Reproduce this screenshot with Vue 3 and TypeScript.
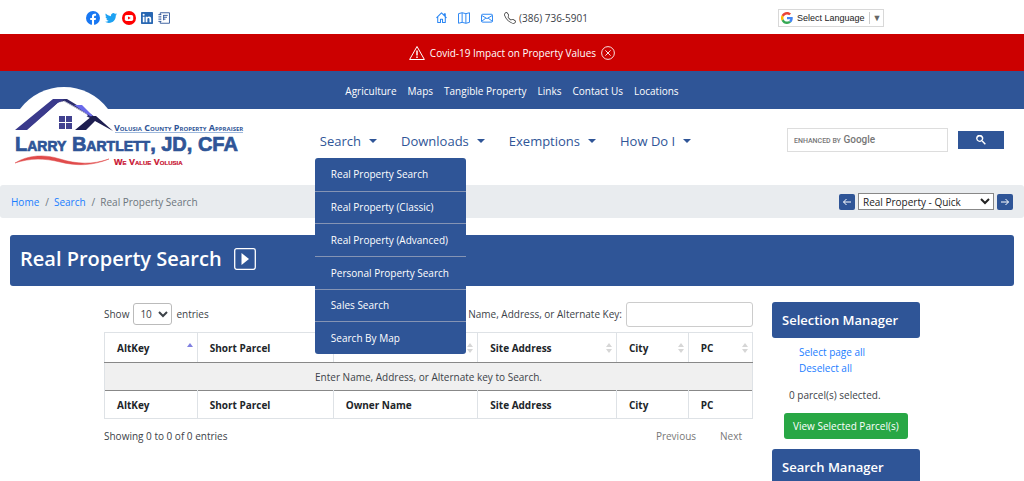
<script setup lang="ts">
import { ref } from 'vue'

const quickLinks = ['Agriculture', 'Maps', 'Tangible Property', 'Links', 'Contact Us', 'Locations']

const searchMenu = [
  'Real Property Search',
  'Real Property (Classic)',
  'Real Property (Advanced)',
  'Personal Property Search',
  'Sales Search',
  'Search By Map',
]

const menus = ['Search', 'Downloads', 'Exemptions', 'How Do I']
const openMenu = ref('Search')

function toggleMenu(name: string) {
  openMenu.value = openMenu.value === name ? '' : name
}

const columns = [
  { label: 'AltKey', cls: 'c-alt' },
  { label: 'Short Parcel', cls: 'c-parcel' },
  { label: 'Owner Name', cls: 'c-owner' },
  { label: 'Site Address', cls: 'c-site' },
  { label: 'City', cls: 'c-city' },
  { label: 'PC', cls: 'c-pc' },
]

const pageSize = ref('10')
const filter = ref('')
const siteQuery = ref('')
const target = ref('Real Property - Quick')
const showBanner = ref(true)
</script>

<template>
  <div class="page">
    <div class="topbar">
      <div class="social">
        <a href="#" aria-label="Facebook">
          <svg class="ico14" viewBox="0 0 16 16"><circle cx="8" cy="8" r="8" fill="#1877f2" /><path d="M6.8 16V10.3H4.8V8h2V6.300c0-2 1.200-3.100 3-3.100.9 0 1.700.15 1.700.15v2h-1c-1 0-1.300.6-1.300 1.250V8h2.200l-.35 2.300H9.200V16z" fill="#fff" /></svg>
        </a>
        <a href="#" aria-label="Twitter">
          <svg class="ico12" viewBox="0 0 24 24"><path fill="#1da1f2" d="M23.950 4.570a10 10 0 0 1-2.820.770 4.960 4.960 0 0 0 2.160-2.720c-.95.550-2 .950-3.130 1.180a4.920 4.920 0 0 0-8.380 4.480C7.690 8.090 4.070 6.130 1.640 3.160a4.820 4.820 0 0 0-.670 2.480c0 1.710.870 3.210 2.190 4.100a4.900 4.900 0 0 1-2.230-.620v.060a4.920 4.920 0 0 0 3.950 4.830 5 5 0 0 1-2.210.080 4.940 4.940 0 0 0 4.600 3.420A9.870 9.870 0 0 1 0 19.540a14 14 0 0 0 7.550 2.210c9.050 0 14-7.500 14-13.980v-.640a9.900 9.900 0 0 0 2.400-2.560z" /></svg>
        </a>
        <a href="#" aria-label="YouTube">
          <svg class="ico14" viewBox="0 0 16 16"><circle cx="8" cy="8" r="8" fill="#f00" /><rect x="3.200" y="4.500" width="9.600" height="7" rx="2" fill="#fff" /><path d="M6.900 6.200v3.600L10 8z" fill="#f00" /></svg>
        </a>
        <a href="#" aria-label="LinkedIn">
          <svg class="ico12" viewBox="0 0 16 16"><rect width="16" height="16" rx="1" fill="#2867b2" /><path fill="#fff" d="M2.400 6.200h2.300v7.400H2.400zM6.200 6.200h2.200v1c.4-.7 1.200-1.200 2.300-1.200 2.300 0 2.900 1.500 2.900 3.500v4.100h-2.300V9.900c0-.9-.1-2-1.300-2s-1.500.9-1.500 1.900v3.800H6.200z" /><circle cx="3.550" cy="3.700" r="1.400" fill="#fff" /></svg>
        </a>
        <a href="#" aria-label="Newsletter">
          <svg class="ico12" viewBox="0 0 16 16" fill="none" stroke="#2f5597"><path d="M3 4V1h12.300v14H3v-3M3 6v1M3 9v1" stroke-width="1.200" /><path d="M.5 3.500h4M.5 6.500h4M.5 9.500h4M.5 12.500h4M7 4.500h6M7 7h5M7 9.500h3M7.500 4v7" stroke-width="1.200" /></svg>
        </a>
      </div>
      <div class="contact">
        <a href="#" aria-label="Home">
          <svg class="ico11" viewBox="0 0 16 16" fill="none" stroke="#2a86f3" stroke-width="1.500" stroke-linejoin="round"><path d="M2.500 7v8.300h4V10.500h3v4.800h4V7M.7 8.500 8 1.200l7.300 7.300M12 5V2.500h1.500v4" /></svg>
        </a>
        <a href="#" aria-label="Map">
          <svg class="ico12" viewBox="0 0 16 16" fill="none" stroke="#2a86f3" stroke-width="1.300" stroke-linejoin="round"><path d="M.7 2.200 5.500 1l5 1.200L15.300 1v12.800l-4.800 1.200-5-1.200-4.800 1.200zM5.500 1v12.800M10.500 2.200V15" /></svg>
        </a>
        <a href="#" aria-label="Email">
          <svg class="ico12" viewBox="0 0 16 16" fill="none" stroke="#2a86f3" stroke-width="1.300" stroke-linejoin="round"><rect x=".7" y="3" width="14.600" height="10.500" rx="1.500" /><path d="m.9 4.600 7.100 4.200 7.100-4.200M.9 12.400l5.600-4.300M15.100 12.400 9.500 8.100" /></svg>
        </a>
        <span class="phone">
          <svg class="ico12" viewBox="0 0 16 16" fill="#444"><path d="M3.650 1.330a.68.68 0 0 0-1.010-.06L1.600 2.300c-.48.490-.66 1.170-.45 1.770a17.570 17.570 0 0 0 4.170 6.610 17.570 17.570 0 0 0 6.610 4.170c.6.210 1.290.030 1.770-.45l1.030-1.030a.68.68 0 0 0-.06-1.010l-2.300-1.800a.68.68 0 0 0-.58-.120l-2.190.550a1.750 1.750 0 0 1-1.660-.46L5.480 8.060a1.750 1.750 0 0 1-.46-1.660l.550-2.190a.68.68 0 0 0-.120-.58zM1.880.51a1.750 1.750 0 0 1 2.610.160l1.800 2.310c.33.420.440.970.310 1.490l-.55 2.190a.68.68 0 0 0 .18.640l2.460 2.460c.17.170.41.240.64.180l2.190-.55a1.750 1.750 0 0 1 1.490.31l2.310 1.790c.83.650.91 1.870.16 2.610l-1.030 1.030c-.74.740-1.850 1.070-2.880.700a18.630 18.630 0 0 1-7.010-4.420A18.630 18.630 0 0 1 .15 4.410c-.36-1.030-.04-2.140.700-2.880z" /></svg>
          (386) 736-5901
        </span>
      </div>
      <div class="language">
        <button type="button" class="translate">
          <svg class="ico12" viewBox="0 0 48 48"><path fill="#ea4335" d="M24 9.500c3.540 0 6.710 1.220 9.210 3.600l6.850-6.850C35.900 2.380 30.470 0 24 0 14.620 0 6.510 5.380 2.560 13.220l7.980 6.190C12.430 13.720 17.740 9.500 24 9.500z" /><path fill="#4285f4" d="M46.980 24.550c0-1.570-.15-3.090-.38-4.550H24v9.020h12.940c-.58 2.960-2.260 5.480-4.780 7.180l7.730 6c4.510-4.180 7.090-10.360 7.090-17.650z" /><path fill="#fbbc05" d="M10.530 28.590a14.500 14.500 0 0 1 0-9.180l-7.980-6.190a24 24 0 0 0 0 21.560z" /><path fill="#34a853" d="M24 48c6.480 0 11.930-2.130 15.890-5.810l-7.730-6c-2.150 1.450-4.920 2.300-8.160 2.300-6.260 0-11.570-4.220-13.470-9.910l-7.980 6.190C6.510 42.620 14.620 48 24 48z" /></svg>
          <span>Select Language</span><i class="down">▼</i>
        </button>
      </div>
    </div>

    <div v-if="showBanner" class="alert">
      <svg class="ico16" viewBox="0 0 16 16" fill="none" stroke="#fff" stroke-linejoin="round"><path d="M8 1.500 15.400 14.500H.6z" /><path d="M8 5.500v5M8 11.500V13" stroke-width="1.500" /></svg>
      <a href="#">Covid-19 Impact on Property Values</a>
      <button type="button" aria-label="Dismiss" @click="showBanner = false">
        <svg class="ico14" viewBox="0 0 16 16" fill="none" stroke="#fff"><circle cx="8" cy="8" r="7.300" /><path d="m5 5 6 6M11 5l-6 6" /></svg>
      </button>
    </div>

    <nav class="quick" aria-label="Quick links">
      <a v-for="l in quickLinks" :key="l" href="#">{{ l }}</a>
    </nav>

    <header class="header">
      <a href="#" class="logo" aria-label="Larry Bartlett, JD, CFA">
        <svg viewBox="0 0 240 90" width="240" height="90">
          <path d="M12 25a55 55 0 0 1 88 0z" fill="#fff" />
          <path d="M7 46 45 15h14l-9 4L19 46z" fill="#3a3a8c" />
          <path d="M56 15h3l18 11 17 12-2 1-40-20z" fill="#2b2b6a" />
          <path d="m50 19 6-2 24 14-14 15H20z" fill="#fff" />
          <path d="m56 17 23 13" stroke="#b9b9cc" fill="none" />
          <path d="m66 21 8 0 12 12-4-1z" fill="#6a6aea" />
          <path d="M67 46 84 32h4l17 15-18-10-9 9z" fill="#1e1e50" />
          <path d="M51 32h6v6h-6zM58 32h6v6h-6zM51 39h6v6h-6zM58 39h6v6h-6z" fill="#41418f" />
          <path d="M107 48.500h128" stroke="#9db8dc" />
          <text class="l-small" x="106" y="47">Volusia County Property Appraiser</text>
          <text class="l-name" x="7" y="67">Larry Bartlett, JD, CFA</text>
          <path d="M7 79C20 71 36 70 52 75s32 6 49 0C84 82 68 82 52 78S22 74 7 79z" fill="#e04b4b" stroke="#e04b4b" stroke-width=".5" />
          <text class="l-value" x="106" y="81">We Value Volusia</text>
        </svg>
      </a>
      <nav class="menu" aria-label="Main">
        <div v-for="m in menus" :key="m" class="menu-item">
          <button type="button" :aria-expanded="openMenu === m" @click="toggleMenu(m)">{{ m }}<i class="caret"></i></button>
          <ul v-if="m === 'Search' && openMenu === m" class="dropdown">
            <li v-for="s in searchMenu" :key="s"><a href="#">{{ s }}</a></li>
          </ul>
        </div>
      </nav>
      <form class="site-search" @submit.prevent>
        <label class="search-box">
          <span v-if="!siteQuery" class="brand"><small>ENHANCED BY</small> Google</span>
          <input v-model="siteQuery" type="text" aria-label="Search this site" />
        </label>
        <button type="submit" aria-label="Search">
          <svg class="ico10" viewBox="0 0 13 13"><path fill="#fff" d="m4.800 7.600c1.600 0 2.900-1.300 2.900-2.900S6.400 1.800 4.800 1.800 1.900 3.100 1.900 4.700s1.300 2.900 2.900 2.900zM9.100 7.600l3.700 3.700-1.300 1.400-3.800-3.800v-.6l-.2-.2A4.700 4.700 0 1 1 8.300 7.400l.2.200z" /></svg>
        </button>
      </form>
    </header>

    <div class="crumbs">
      <ol>
        <li><a href="#">Home</a></li>
        <li><a href="#">Search</a></li>
        <li>Real Property Search</li>
      </ol>
      <div class="jump">
        <button type="button" aria-label="Previous search"><svg class="ico10" viewBox="0 0 10 10"><path d="M9 5H1.500M4.500 2l-3 3 3 3" fill="none" stroke="#fff" /></svg></button>
        <select v-model="target" aria-label="Search type">
          <option>Real Property - Quick</option>
          <option>Real Property - Advanced</option>
        </select>
        <button type="button" aria-label="Next search"><svg class="ico10" viewBox="0 0 10 10"><path d="M1 5h7.500M5.500 2l3 3-3 3" fill="none" stroke="#fff" /></svg></button>
      </div>
    </div>

    <h1 class="title">
      Real Property Search
      <button type="button" aria-label="Play tutorial">
        <svg class="ico22" viewBox="0 0 22 22"><rect x=".7" y=".7" width="20.600" height="20.600" rx="2" fill="none" stroke="#fff" stroke-width="1.300" /><path d="M7.500 5v12l7.500-6z" fill="#fff" /></svg>
      </button>
    </h1>

    <main class="content">
      <section class="results">
        <div class="tools">
          <label class="length">Show
            <select v-model="pageSize"><option>10</option><option>25</option><option>50</option></select>
            entries</label>
          <label class="filter">Name, Address, or Alternate Key: <input v-model="filter" type="text" /></label>
        </div>
        <table>
          <thead>
            <tr>
              <th v-for="(c, i) in columns" :key="c.label" :class="c.cls" scope="col">
                {{ c.label }}
                <svg class="sort" viewBox="0 0 6 10">
                  <path d="M0 4h6L3 0z" :fill="i === 0 ? '#7f7fe0' : '#d6d6d6'" />
                  <path v-if="i > 0" d="M0 6h6L3 10z" fill="#d6d6d6" />
                </svg>
              </th>
            </tr>
          </thead>
          <tbody>
            <tr><td colspan="6">Enter Name, Address, or Alternate key to Search.</td></tr>
          </tbody>
          <tfoot>
            <tr><th v-for="c in columns" :key="c.label">{{ c.label }}</th></tr>
          </tfoot>
        </table>
        <div class="pager">
          <span>Showing 0 to 0 of 0 entries</span>
          <div>
            <button type="button">Previous</button>
            <button type="button">Next</button>
          </div>
        </div>
      </section>
      <aside class="side">
        <h2>Selection Manager</h2>
        <div class="picks">
          <a href="#">Select page all</a>
          <a href="#">Deselect all</a>
        </div>
        <p>0 parcel(s) selected.</p>
        <button type="button" class="view">View Selected Parcel(s)</button>
        <h2>Search Manager</h2>
      </aside>
    </main>
  </div>
</template>

<style>
body {
  margin: 0;
  background: #fff;
  overflow: hidden;
}
</style>

<style scoped>
.page {
  font-family: 'Open Sans', 'Noto Sans', sans-serif;
  font-size: 10px;
  line-height: 16px;
  color: #3c4248;
}
.page * { box-sizing: border-box; }
button, input, select { font: inherit; color: inherit; margin: 0; }
button { border: 0; padding: 0; background: none; cursor: pointer; }
a { color: #1a7dff; text-decoration: none; }
svg { display: block; flex: none; }
.ico10 { width: 10px; height: 10px; }
.ico11 { width: 11px; height: 11px; }
.ico12 { width: 12px; height: 12px; }
.ico14 { width: 14px; height: 14px; }
.ico16 { width: 16px; height: 16px; }
.ico22 { width: 22px; height: 22px; }

.topbar {
  display: grid;
  grid-template-columns: 1fr 2fr 1fr;
  align-items: center;
  height: 34px;
  padding-top: 1px;
}
.social { display: flex; justify-content: center; align-items: center; gap: 5px; }
.contact { display: flex; justify-content: center; align-items: center; gap: 11px; }
.phone { display: flex; align-items: center; gap: 3px; }
.language { padding-left: 10px; }
.translate {
  display: flex;
  align-items: center;
  gap: 4px;
  height: 18px;
  padding: 0 2px;
  border: 1px solid #d8d8d8;
  font-family: 'Liberation Sans', sans-serif;
  font-size: 9px;
  color: #222;
}
.down {
  font-style: normal;
  line-height: 12px;
  color: #666;
  border-left: 1px solid #ccc;
  padding-left: 3px;
}

.alert {
  display: flex;
  justify-content: center;
  align-items: center;
  gap: 5px;
  height: 37px;
  background: #c00;
}
.alert a, .quick a { color: #fff; }

.quick {
  display: flex;
  justify-content: center;
  align-items: center;
  gap: 11px;
  height: 38px;
  padding-top: 2px;
  background: #2f5597;
}

.header {
  display: grid;
  grid-template-columns: 1fr 2fr 1fr;
  height: 76px;
}
.logo { position: relative; }
.logo svg { position: absolute; left: 8px; top: -25px; }
.logo text { font-variant: small-caps; font-weight: 700; }
.l-small { font-family: 'Open Sans', sans-serif; font-size: 9px; fill: #2f5597; }
.l-name { font-family: 'Liberation Sans', sans-serif; font-size: 20px; fill: #2f5597; stroke: #2f5597; stroke-width: .7px; }
.l-value { font-family: 'Liberation Sans', sans-serif; font-size: 9px; fill: #c8102e; stroke: #c8102e; stroke-width: .2px; }

.menu { display: flex; justify-content: center; align-items: flex-start; gap: 24px; padding: 20px 13px 0 0; }
.menu-item { position: relative; }
.menu-item > button {
  display: flex;
  align-items: center;
  gap: 8px;
  height: 24px;
  font-size: 13px;
  color: #2f5597;
}
.caret { border: 4px solid transparent; border-top-color: #2f5597; border-bottom: 0; }
.dropdown {
  position: absolute;
  z-index: 5;
  top: 29px;
  left: -5px;
  display: grid;
  grid-auto-rows: 1fr;
  width: 151px;
  height: 196px;
  margin: 0;
  padding: 0;
  list-style: none;
  background: #2f5597;
  border-radius: 3px;
}
.dropdown li { display: flex; align-items: center; }
.dropdown li + li { border-top: 1px solid #8594b4; }
.dropdown a { flex: 1; padding: 0 16px; color: #fff; white-space: nowrap; }

.site-search { display: flex; align-items: center; gap: 10px; height: 62px; padding: 0 20px 0 19px; }
.search-box { position: relative; flex: 1; min-width: 0; }
.search-box input { display: block; width: 100%; height: 24px; border: 1px solid #ddd; background: transparent; }
.brand {
  position: absolute;
  left: 7px;
  top: 4px;
  font-family: Roboto, sans-serif;
  font-size: 10px;
  font-weight: 500;
  color: #777;
}
.brand small { font-size: 7px; }
.site-search button {
  display: flex;
  justify-content: center;
  align-items: center;
  width: 46px;
  height: 18px;
  background: #2f5597;
}

.crumbs {
  display: flex;
  justify-content: space-between;
  align-items: center;
  height: 33px;
  padding: 0 11px;
  background: #e9ecef;
  border-radius: 3px;
}
.crumbs ol { display: flex; margin: 0; padding: 0; list-style: none; color: #6c757d; }
.crumbs li + li::before { content: '/'; padding: 0 5px 0 6px; }
.jump { display: flex; align-items: center; gap: 3px; }
.jump button {
  display: flex;
  justify-content: center;
  align-items: center;
  width: 16px;
  height: 16px;
  background: #2f5597;
  border-radius: 2px;
}
.jump select { width: 136px; height: 17px; padding: 0; border: 1px solid #888; background: #fff; color: #222; }

.title {
  display: flex;
  align-items: center;
  gap: 12px;
  height: 51px;
  margin: 17px 10px 16px;
  padding: 0 10px 3px;
  font-size: 20px;
  font-weight: 600;
  line-height: 24px;
  color: #fff;
  background: #2f5597;
  border-radius: 3px;
}

.content {
  display: grid;
  grid-template-columns: minmax(0, 1fr) 148px;
  gap: 19px;
  max-width: 816px;
  margin: 0 auto;
}
.tools { display: flex; justify-content: space-between; align-items: center; height: 24px; margin-bottom: 6px; }
.tools label { display: flex; align-items: center; gap: 4px; }
.length select { width: 39px; height: 22px; padding: 0 2px; border: 1px solid #bbb; border-radius: 3px; background: #fff; }
.filter input { width: 127px; height: 25px; border: 1px solid #ccc; border-radius: 3px; }
table { width: 100%; table-layout: fixed; border-collapse: collapse; border: 1px solid #dee2e6; }
th { position: relative; padding: 0 12px; text-align: left; font-weight: 700; color: #212529; border: 1px solid #dee2e6; }
thead th { height: 30px; border-bottom: 1px solid #888; }
td { height: 28px; padding: 0; text-align: center; background: #f0f0f0; }
tfoot th { height: 28px; border-top: 1px solid #888; }
.c-alt { width: 14.300%; }
.c-parcel { width: 21%; }
.c-owner { width: 22.300%; }
.c-site { width: 21.400%; }
.c-city { width: 11.100%; }
.sort { position: absolute; right: 4px; top: 10px; width: 6px; height: 10px; }
.pager { display: flex; justify-content: space-between; margin-top: 9px; }
.pager div { display: flex; gap: 24px; padding-right: 11px; }
.pager button { color: #777; }

.side h2 {
  height: 36px;
  margin: 0;
  padding: 0 10px;
  font-size: 13px;
  font-weight: 600;
  line-height: 36px;
  color: #fff;
  background: #2f5597;
  border-radius: 3px;
}
.picks { display: flex; flex-direction: column; padding: 6px 27px 0; }
.side p { margin: 11px 17px 10px; }
.view {
  height: 26px;
  margin: 0 0 10px 12px;
  padding: 0 9px;
  color: #fff;
  background: #28a745;
  border-radius: 3px;
}
</style>
